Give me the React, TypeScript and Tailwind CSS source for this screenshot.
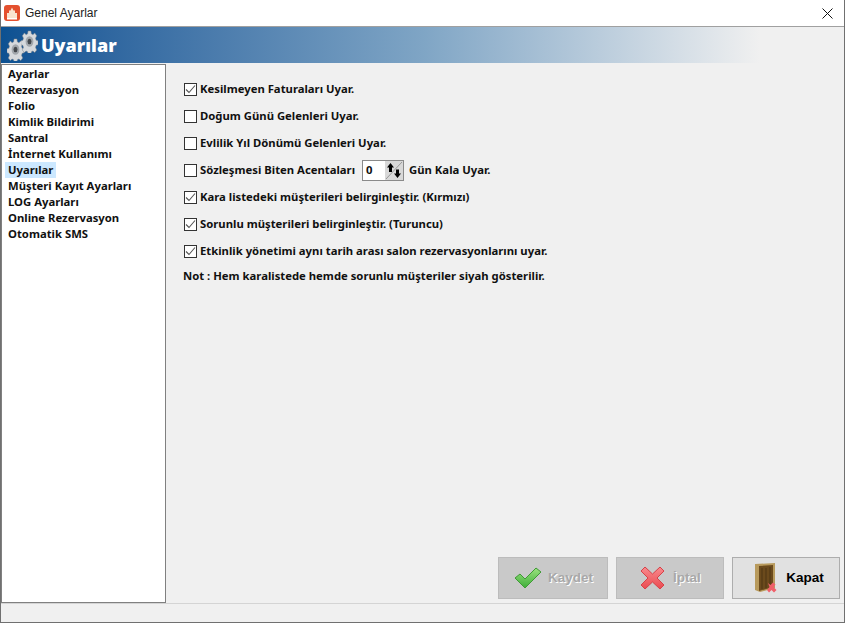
const menuItems = [
  "Ayarlar",
  "Rezervasyon",
  "Folio",
  "Kimlik Bildirimi",
  "Santral",
  "İnternet Kullanımı",
  "Uyarılar",
  "Müşteri Kayıt Ayarları",
  "LOG Ayarları",
  "Online Rezervasyon",
  "Otomatik SMS",
];

const Check = ({ checked }: { checked: boolean }) => (
  <span className="w-[13px] h-[13px] border border-[#333333] bg-white flex items-center justify-center shrink-0">
    {checked && (
      <svg width="11" height="11" viewBox="0 0 11 11" fill="none">
        <path d="M1 5.500 L4 8.500 L10 1.500" stroke="#555555" strokeWidth="1.100" />
      </svg>
    )}
  </span>
);

const Row = ({ checked, label }: { checked: boolean; label: string }) => (
  <div className="flex items-center gap-[3px] h-[27px]">
    <Check checked={checked} />
    <span>{label}</span>
  </div>
);

const Gear = () => (
  <svg width="17" height="23" viewBox="0 0 24 24" preserveAspectRatio="none" className="shrink-0">
    <path
      d="M10 1h4l.6 3 2.200.9 2.600-1.700 2.800 2.800-1.700 2.600.9 2.200 3 .6v4l-3 .6-.9 2.200 1.700 2.600-2.800 2.800-2.600-1.700-2.200.9-.6 3h-4l-.6-3-2.200-.9-2.600 1.700-2.800-2.800 1.700-2.600-.9-2.200-3-.6v-4l3-.6.9-2.200L1.900 6l2.800-2.800 2.600 1.700L9.400 4z"
      fill="#d6d9dc"
      stroke="#7f858a"
      strokeWidth="0.6"
    />
    <circle cx="12" cy="12" r="5.500" fill="#a2a7ac" />
    <circle cx="12" cy="12" r="2.800" fill="#44484c" />
  </svg>
);

export default function App() {
  return (
    <div className="w-[845px] h-[623px] flex flex-col bg-[#f0f0f0] border-x border-b border-[#707070] font-['Noto_Sans',sans-serif] text-[11.3px] font-bold text-[#111111] overflow-hidden">
      <div className="h-[27px] bg-white flex items-center pl-[3px] pr-[10px] shrink-0 border-b border-[#a0a0a0] font-normal">
        <svg width="16" height="16" viewBox="0 0 16 16">
          <rect width="16" height="16" rx="3" fill="#e4502e" />
          <path d="M8 2.500 L9.500 5.500 H11 V8 H13 V13 H3 V8 H5 V5.500 H6.500 Z" fill="#f9e3cf" />
          <rect x="3" y="13" width="10" height="1.500" fill="#ffffff" />
        </svg>
        <span className="ml-[5px] text-[12px] font-['Liberation_Sans',sans-serif] text-[#222222]">Genel Ayarlar</span>
        <svg width="11" height="11" viewBox="0 0 11 11" className="ml-auto mr-[1px]">
          <path d="M0.500 0.500 L10.500 10.500 M10.500 0.500 L0.500 10.500" stroke="#111111" strokeWidth="1" />
        </svg>
      </div>

      <div className="h-[36px] shrink-0 flex items-center pl-[6px] bg-gradient-to-r from-[#0c5192] via-[#7fa5c5] via-50% to-[#f0f0f0] to-90%">
        <div className="flex items-end w-[31px] h-[32px]">
          <Gear />
          <div className="-ml-[3px] mb-[8px]">
            <Gear />
          </div>
        </div>
        <span className="ml-[3px] text-[18px] text-white font-['Open_Sans',sans-serif] font-extrabold">Uyarılar</span>
      </div>

      <div className="flex-1 flex min-h-0 mt-[1px]">
        <div className="w-[165px] shrink-0 bg-white border border-[#808080] pt-[1px] pl-[3px]">
          {menuItems.map((item) => (
            <div key={item} className="h-[16px] flex items-center">
              <span className={`px-[3px] h-[16px] leading-[16px] ${item === "Uyarılar" ? "bg-[#cce8ff]" : ""}`}>{item}</span>
            </div>
          ))}
        </div>

        <div className="flex-1 flex flex-col pl-[18px] pr-[4px] pt-[12px] pb-[4px]">
          <Row checked label="Kesilmeyen Faturaları Uyar." />
          <Row checked={false} label="Doğum Günü Gelenleri Uyar." />
          <Row checked={false} label="Evlilik Yıl Dönümü Gelenleri Uyar." />
          <div className="flex items-center gap-[3px] h-[27px]">
            <Check checked={false} />
            <span>Sözleşmesi Biten Acentaları</span>
            <div className="ml-[4px] w-[42px] h-[21px] border border-[#8a8a8a] bg-white flex items-center justify-between pl-[3px]">
              <span>0</span>
              <svg width="18" height="19" viewBox="0 0 18 19" className="bg-[#d8d8d8]">
                <path d="M17 1 L1 18" stroke="#999999" strokeWidth="1" />
                <path d="M5.500 2 L9 6.500 H7 V11 H4 V6.500 H2 Z M12.500 17 L9 12.500 H11 V8.500 H14 V12.500 H16 Z" fill="#000000" />
              </svg>
            </div>
            <span className="ml-[2px]">Gün Kala Uyar.</span>
          </div>
          <Row checked label="Kara listedeki müşterileri belirginleştir. (Kırmızı)" />
          <Row checked label="Sorunlu müşterileri belirginleştir. (Turuncu)" />
          <Row checked label="Etkinlik yönetimi aynı tarih arası salon rezervasyonlarını uyar." />
          <div className="h-[23px] flex items-center -ml-[1px]">Not : Hem karalistede hemde sorunlu müşteriler siyah gösterilir.</div>

          <div className="mt-auto flex justify-end gap-[8px] font-['Liberation_Sans',sans-serif] text-[13.500px]">
            <button className="w-[110px] h-[42px] bg-[#c9c9c9] border border-[#bcbcbc] flex items-center justify-center gap-[6px] pl-[1px] text-[#a8a8a8] [text-shadow:1px_1px_0_#ffffff]">
              <svg width="28" height="22" viewBox="0 0 28 22">
                <defs>
                  <linearGradient id="okFill" x1="0" y1="0" x2="0" y2="1">
                    <stop offset="0" stopColor="#9be27f" />
                    <stop offset="1" stopColor="#3fae3a" />
                  </linearGradient>
                </defs>
                <path d="M1 11 L6 7 L11 12 L22 1 L27 5 L11 21 Z" fill="url(#okFill)" stroke="#3f9a35" strokeWidth="1" />
              </svg>
              <span>Kaydet</span>
            </button>
            <button className="w-[108px] h-[42px] bg-[#c9c9c9] border border-[#bcbcbc] flex items-center justify-center gap-[8px] pl-[1px] text-[#a8a8a8] [text-shadow:1px_1px_0_#ffffff]">
              <svg width="25" height="24" viewBox="0 0 25 24">
                <defs>
                  <linearGradient id="noFill" x1="0" y1="0" x2="0" y2="1">
                    <stop offset="0" stopColor="#f98a8e" />
                    <stop offset="1" stopColor="#ea4a50" />
                  </linearGradient>
                </defs>
                <path d="M1 5 L5 1 L12.500 8 L20 1 L24 5 L17 12 L24 19 L20 23 L12.500 16 L5 23 L1 19 L8 12 Z" fill="url(#noFill)" stroke="#d64248" strokeWidth="1" />
              </svg>
              <span>İptal</span>
            </button>
            <button className="w-[108px] h-[42px] bg-[#e1e1e1] border border-[#adadad] flex items-center justify-center gap-[7px] pl-[6px] text-black">
              <svg width="25" height="30" viewBox="0 0 25 30">
                <path d="M1 1 L21 0 V25 L6 29 L1 27 Z" fill="#b89a5c" />
                <path d="M5 3 L19 2 V24 L5 28 Z" fill="#6b4a1c" />
                <path d="M8 5 V26 M12 5 V25 M16 4 V24" stroke="#4f3512" strokeWidth="1" />
                <path d="M14 20 L16.500 22 L19 19.500 L21.500 21.500 L19.500 24 L22.500 27 L20 29.500 L17.500 27 L15 29.500 L13 27 L15.500 24 Z" fill="#f0606a" />
              </svg>
              <span>Kapat</span>
            </button>
          </div>
        </div>
      </div>

      <div className="h-[19px] shrink-0 border-t border-[#d4d4d4]" />
    </div>
  );
}
